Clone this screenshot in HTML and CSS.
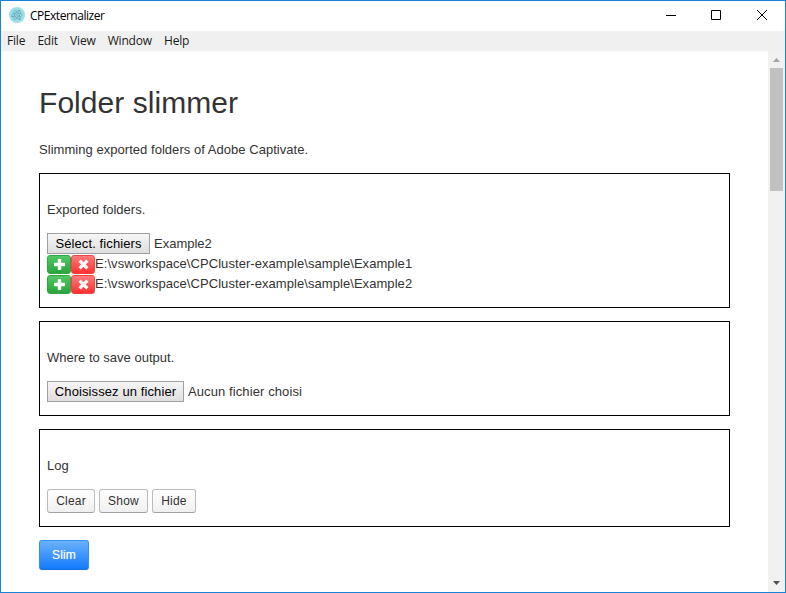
FILE: index.html
```html
<!DOCTYPE html>
<html lang="en">
<head>
<meta charset="utf-8">
<title>CPExternalizer</title>
<link rel="stylesheet" href="styles.css">
</head>
<body>
<svg class="defs" width="0" height="0" aria-hidden="true">
  <symbol id="plus" viewBox="0 0 11 11"><path d="M4.4 0h2.2q.6 0 .6.6V3.8h3.2q.6 0 .6.6v2.2q0 .6-.6.6H7.2v3.2q0 .6-.6.6H4.4q-.6 0-.6-.6V7.2H.6q-.6 0-.6-.6V4.4q0-.6.6-.6h3.2V.6q0-.6.6-.6z"/></symbol>
  <symbol id="cross" viewBox="0 0 11 11"><path d="M2.8 0.5 5.5 3.2 8.2 0.5 10.5 2.8 7.8 5.5 10.5 8.2 8.2 10.5 5.5 7.8 2.8 10.5 0.5 8.2 3.2 5.5 0.5 2.8z"/></symbol>
</svg>
<div class="window">
  <header class="titlebar">
    <svg class="logo" width="16" height="16" viewBox="0 0 16 16">
      <circle cx="8" cy="8" r="8" fill="#9be0e9"/>
      <g fill="none" stroke="#5f9eac" stroke-width=".55">
        <ellipse cx="8" cy="8" rx="5.2" ry="2.1" transform="rotate(0 8 8)"/>
        <ellipse cx="8" cy="8" rx="5.2" ry="2.1" transform="rotate(60 8 8)"/>
        <ellipse cx="8" cy="8" rx="5.2" ry="2.1" transform="rotate(120 8 8)"/>
      </g>
      <g fill="#54909f"><circle cx="8" cy="8" r=".7"/><circle cx="3.2" cy="9.4" r=".7"/><circle cx="10.8" cy="12.2" r=".7"/><circle cx="10.2" cy="3.6" r=".7"/></g>
    </svg>
    <span class="app-name">CPExternalizer</span>
    <div class="controls">
      <svg width="46" height="30" viewBox="0 0 46 30"><path d="M18 14.5h10"/></svg>
      <svg width="46" height="30" viewBox="0 0 46 30"><path d="M17.5 9.5h9v9h-9z"/></svg>
      <svg width="46" height="30" viewBox="0 0 46 30"><path d="M17 9 27 19M27 9 17 19"/></svg>
    </div>
  </header>
  <nav class="menu"><span>File</span><span>Edit</span><span>View</span><span>Window</span><span>Help</span></nav>
  <div class="body">
    <main class="content">
      <h1>Folder slimmer</h1>
      <p class="intro">Slimming exported folders of Adobe Captivate.</p>
      <section class="panel folders">
        <p>Exported folders.</p>
        <div class="file-row"><button class="file select">Sélect. fichiers</button><span>Example2</span></div>
        <div class="folder"><button class="mini add"><svg><use href="#plus"/></svg></button><button class="mini remove"><svg><use href="#cross"/></svg></button><span>E:\vsworkspace\CPCluster-example\sample\Example1</span></div>
        <div class="folder"><button class="mini add"><svg><use href="#plus"/></svg></button><button class="mini remove"><svg><use href="#cross"/></svg></button><span>E:\vsworkspace\CPCluster-example\sample\Example2</span></div>
      </section>
      <section class="panel output">
        <p>Where to save output.</p>
        <div class="file-row"><button class="file choose">Choisissez un fichier</button><span class="none">Aucun fichier choisi</span></div>
      </section>
      <section class="panel log">
        <p>Log</p>
        <div class="actions"><button class="btn clear">Clear</button><button class="btn show">Show</button><button class="btn hide">Hide</button></div>
      </section>
      <button class="primary">Slim</button>
    </main>
    <div class="scrollbar">
      <svg class="arrow up" width="17" height="17" viewBox="0 0 17 17"><path d="M5 11 8.5 7 12 11z"/></svg>
      <div class="thumb"></div>
      <svg class="arrow down" width="17" height="17" viewBox="0 0 17 17"><path d="M5 6h7L8.5 10z"/></svg>
    </div>
  </div>
</div>
</body>
</html>
```
FILE: styles.css
```css
* { box-sizing: border-box; }
body { margin: 0; font: 13px/20px "Liberation Sans", Arial, sans-serif; color: #333; }
.defs { display: block; width: 0; height: 0; }
button { font: inherit; margin: 0; padding: 0; white-space: nowrap; }
h1, p { margin: 0; font-weight: normal; }
.window { width: 786px; height: 593px; border: 1px solid #1883d7; background: #fff; display: flex; flex-direction: column; overflow: hidden; }
.titlebar { height: 30px; display: flex; align-items: center; padding-left: 8px; flex: none; font: 12px/30px "Open Sans", sans-serif; color: #000; }
.app-name { margin-left: 5px; letter-spacing: -0.47px; }
.logo { margin-bottom: 2px; }
.controls { margin-left: auto; margin-right: -1px; display: flex; }
.controls svg { fill: none; stroke: #000; stroke-width: 1; }
.menu { height: 20px; flex: none; display: flex; gap: 12.2px; padding-left: 6px; background: #f0f0f0; font: 12px/20px "Open Sans", sans-serif; color: #1a1a1a; letter-spacing: -0.2px; }
.body { flex: 1; display: flex; min-height: 0; }
.content { flex: 1; padding: 32px 38px 0; white-space: nowrap; }
h1 { font-size: 30px; line-height: 40px; height: 40px; letter-spacing: 0.05px; }
.intro { margin: 17px 0 13px; height: 20px; letter-spacing: 0.04px; }
.panel { width: 691px; border: 1px solid #000; padding: 26px 7px 0; margin-bottom: 13px; }
.panel p { height: 20px; margin-bottom: 13px; }
.folders { height: 135px; }
.output { height: 95px; }
.log { height: 98px; }
.file-row { display: flex; gap: 4px; height: 21px; line-height: 21px; }
.none { letter-spacing: 0.1px; }
.file { height: 21px; border: 1px solid #a0a0a0; background: linear-gradient(#f6f6f6, #dedede); color: #000; line-height: 19px; letter-spacing: 0.1px; }
.select { width: 103px; }
.choose { width: 137px; }
.folder { display: flex; height: 20px; line-height: 20px; letter-spacing: 0.06px; }
.mini { width: 24px; height: 19px; margin-top: 1px; border: 1px solid; border-radius: 3px; display: flex; align-items: center; justify-content: center; }
.mini svg { width: 11px; height: 11px; fill: #fff; }
.add { background: linear-gradient(#50c965, #2ba33e); border-color: #2fa544; }
.remove { background: linear-gradient(#ff7c7c, #ff3030); border-color: #f04444; }
.actions { display: flex; gap: 4px; }
.btn { height: 24px; border: 1px solid #bbb; border-bottom-color: #a2a2a2; border-radius: 3px; background: linear-gradient(#fff, #f0f0f0); color: #333; font-size: 12px; line-height: 22px; letter-spacing: 0.2px; }
.clear { width: 48px; }
.show { width: 49px; }
.hide { width: 44px; }
.primary { display: block; width: 50px; height: 30px; border: 1px solid #3191f7; border-bottom-color: #1670e0; border-radius: 3px; background: linear-gradient(#6bb1fb, #147aff); color: #fff; font-size: 12px; line-height: 28px; letter-spacing: 0.2px; text-shadow: 0 0 1px rgba(255,255,255,.5); }
.scrollbar { width: 17px; background: #f1f1f1; display: flex; flex-direction: column; flex: none; }
.arrow { display: block; flex: none; }
.up { fill: #a3a3a3; }
.down { fill: #505050; margin-top: auto; }
.thumb { width: 13px; height: 123px; margin-left: 2px; background: #c1c1c1; }
```
